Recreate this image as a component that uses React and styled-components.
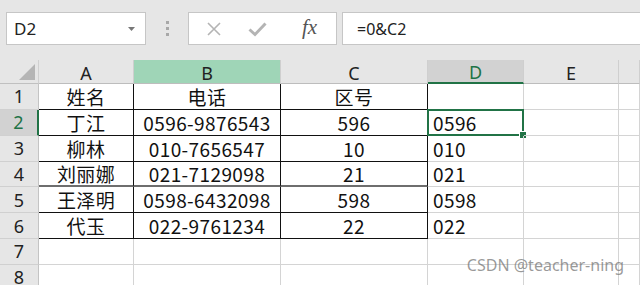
import React from 'react';
import styled, { createGlobalStyle } from 'styled-components';

const Global = createGlobalStyle`
  html, body { margin: 0; padding: 0; background: #fff; overflow: hidden; }
  body { width: 640px; height: 285px; font-family: "Noto Sans CJK SC", "Noto Sans", sans-serif; }
`;

const Page = styled.div`
  position: relative;
  width: 640px;
  height: 285px;
  overflow: hidden;
  background: #fff;
`;

const Toolbar = styled.div`
  height: 60px;
  background: #e6e6e6;
  display: flex;
  align-items: flex-start;
  padding: 12px 0 0 6px;
  box-sizing: border-box;
`;

const NameBox = styled.div`
  width: 140px;
  height: 33px;
  box-sizing: border-box;
  background: #fff;
  border: 1px solid #c6c6c6;
  display: flex;
  align-items: center;
  justify-content: space-between;
  padding: 0 10px 0 7px;
  font-family: "Noto Sans", sans-serif;
  font-size: 17px;
  color: #222;
`;

const Dots = styled.div`
  width: 42px;
  height: 33px;
  display: flex;
  flex-direction: column;
  align-items: center;
  justify-content: center;
  gap: 3px;
  span {
    width: 3px;
    height: 3px;
    background: #a8a8a8;
  }
`;

const FxBox = styled.div`
  width: 149px;
  height: 33px;
  box-sizing: border-box;
  background: #fff;
  border: 1px solid #c6c6c6;
  display: flex;
  align-items: center;
  padding-left: 17px;
  gap: 26px;
`;

const Fx = styled.span`
  font-family: "Liberation Serif", serif;
  font-style: italic;
  font-size: 21px;
  color: #555;
  margin-left: 9px;
  margin-top: -2px;
`;

const Formula = styled.div`
  flex: 1;
  margin-left: 5px;
  height: 33px;
  box-sizing: border-box;
  background: #fff;
  border: 1px solid #c6c6c6;
  border-right: none;
  display: flex;
  align-items: center;
  padding-left: 14px;
  font-family: "Noto Sans", sans-serif;
  font-size: 16px;
  color: #222;
`;

const Sheet = styled.div`
  display: grid;
  grid-template-columns: 39px 95px 147px 147px 96px 95px 1fr;
  grid-template-rows: 24px repeat(8, 25.85px);
  font-size: 19px;
  color: #111;
`;

const Corner = styled.div`
  position: relative;
  background: #e6e6e6;
  border-right: 1px solid #d0d0d0;
  border-bottom: 1px solid #c0c0c0;
  box-sizing: border-box;
  &::after {
    content: '';
    position: absolute;
    right: 3px;
    bottom: 3px;
    width: 0;
    height: 0;
    border-left: 16px solid transparent;
    border-bottom: 16px solid #b5b5b5;
  }
`;

const headBg = { normal: '#e6e6e6', hover: '#9fd5b7', active: '#d2d2d2' };

const ColHead = styled.div`
  background: ${p => headBg[p.$state]};
  color: ${p => (p.$state === 'active' ? '#217346' : '#222')};
  border-right: 1px solid #cfcfcf;
  border-bottom: ${p => (p.$state === 'active' ? '2px solid #217346' : '1px solid #bdbdbd')};
  box-sizing: border-box;
  display: flex;
  align-items: center;
  justify-content: center;
  font-family: "Noto Sans", sans-serif;
  font-size: 18px;
  line-height: 1;
  padding-top: 2px;
`;

const RowHead = styled.div`
  background: ${p => (p.$active ? '#d2d2d2' : '#e6e6e6')};
  color: ${p => (p.$active ? '#217346' : '#222')};
  border-right: ${p => (p.$active ? '2px solid #217346' : '1px solid #c4c4c4')};
  border-bottom: 1px solid #d0d0d0;
  box-sizing: border-box;
  display: flex;
  align-items: center;
  justify-content: center;
  font-family: "Noto Sans", sans-serif;
  font-size: 18px;
  line-height: 1;
`;

const Cell = styled.div`
  position: relative;
  box-sizing: border-box;
  border-right: 1px solid ${p => (p.$boxed ? '#111' : '#d4d4d4')};
  border-bottom: ${p => (p.$thick ? '2px solid #6e6e6e' : `1px solid ${p.$boxed ? '#111' : '#d4d4d4'}`)};
  display: flex;
  align-items: center;
  justify-content: ${p => (p.$left ? 'flex-start' : 'center')};
  padding-left: ${p => (p.$left ? '5px' : '0')};
  white-space: nowrap;
  line-height: 1;
  letter-spacing: 0.4px;
`;

const Selection = styled.div`
  position: absolute;
  left: -1px;
  top: -1px;
  right: -1px;
  bottom: -1px;
  border: 2px solid #217346;
  pointer-events: none;
  &::after {
    content: '';
    position: absolute;
    right: -5px;
    bottom: -5px;
    width: 6px;
    height: 6px;
    background: #217346;
    border: 1px solid #fff;
  }
`;

const Watermark = styled.div`
  position: absolute;
  right: 16px;
  bottom: 9px;
  font-family: "Noto Sans", sans-serif;
  font-size: 16px;
  color: rgba(120, 120, 120, 0.75);
`;

const cols = [
  { key: 'A', state: 'normal' },
  { key: 'B', state: 'hover' },
  { key: 'C', state: 'normal' },
  { key: 'D', state: 'active' },
  { key: 'E', state: 'normal' },
  { key: '', state: 'normal' },
];

const rows = [
  ['姓名', '电话', '区号', ''],
  ['丁江', '0596-9876543', '596', '0596'],
  ['柳林', '010-7656547', '10', '010'],
  ['刘丽娜', '021-7129098', '21', '021'],
  ['王泽明', '0598-6432098', '598', '0598'],
  ['代玉', '022-9761234', '22', '022'],
  ['', '', '', ''],
  ['', '', '', ''],
];

const CrossIcon = () => (
  <svg width="16" height="16" viewBox="0 0 16 16">
    <path d="M2 2L14 14M14 2L2 14" stroke="#b4b4b4" strokeWidth="1.6" fill="none" />
  </svg>
);

const CheckIcon = () => (
  <svg width="19" height="16" viewBox="0 0 19 16">
    <path d="M1.5 8.5L7 13.5L17.5 2.5" stroke="#b4b4b4" strokeWidth="3" fill="none" />
  </svg>
);

const Caret = () => (
  <svg width="7" height="4" viewBox="0 0 7 4">
    <path d="M0 0H7L3.5 4Z" fill="#777" />
  </svg>
);

export default function App() {
  return (
    <Page>
      <Global />
      <Toolbar>
        <NameBox>
          D2
          <Caret />
        </NameBox>
        <Dots>
          <span />
          <span />
          <span />
        </Dots>
        <FxBox>
          <CrossIcon />
          <CheckIcon />
          <Fx>fx</Fx>
        </FxBox>
        <Formula>=0&amp;C2</Formula>
      </Toolbar>
      <Sheet>
        <Corner />
        {cols.map((c, i) => (
          <ColHead key={i} $state={c.state}>{c.key}</ColHead>
        ))}
        {rows.map((r, ri) => (
          <React.Fragment key={ri}>
            <RowHead $active={ri === 1}>{ri + 1}</RowHead>
            {r.slice(0, 3).map((v, ci) => (
              <Cell key={ci} $boxed={ri < 6} $thick={ri === 3}>{v}</Cell>
            ))}
            <Cell $left>
              {r[3]}
              {ri === 1 && <Selection />}
            </Cell>
            <Cell />
            <Cell />
          </React.Fragment>
        ))}
      </Sheet>
      <Watermark>CSDN @teacher-ning</Watermark>
    </Page>
  );
}
